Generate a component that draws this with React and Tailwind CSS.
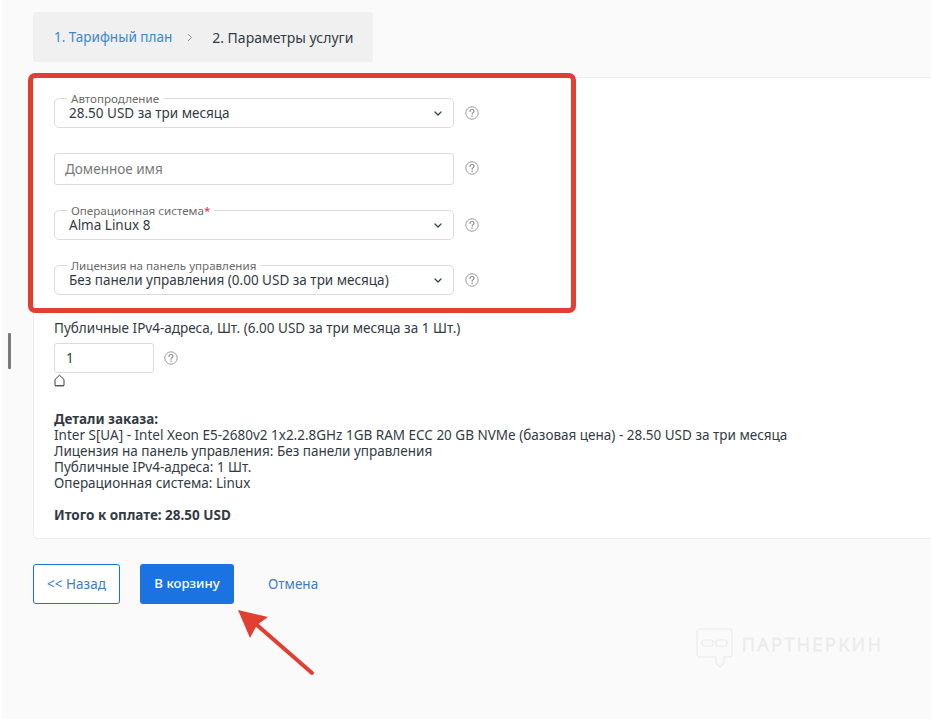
import React from "react";

const font = { fontFamily: '"Noto Sans", "Open Sans", sans-serif' };

function Help() {
  return (
    <svg width="14" height="14" viewBox="0 0 14 14" className="shrink-0" fill="none">
      <circle cx="7" cy="7" r="6.2" stroke="#9a9a9a" strokeWidth="1" />
      <path d="M5 5.4c0-1.2 1-1.9 2.1-1.9S9 4.2 9 5.2c0 1.4-1.9 1.5-1.9 3" stroke="#8a8a8a" strokeWidth="1.2" strokeLinecap="round" />
      <circle cx="7.1" cy="10.2" r="0.8" fill="#8a8a8a" />
    </svg>
  );
}

function Chevron() {
  return (
    <svg width="8" height="5" viewBox="0 0 8 5" fill="none" className="shrink-0">
      <path d="M1 1l3 3 3-3" stroke="#2c3e50" strokeWidth="1.2" strokeLinecap="round" strokeLinejoin="round" />
    </svg>
  );
}

function SelectRow({ label, value, required, mt }) {
  return (
    <div className={`flex items-center ${mt}`}>
      <div className="relative flex h-[30px] w-[400px] items-center justify-between rounded-[5px] border border-[#dcdcdc] bg-white pl-[14px] pr-[11px]">
        <span className="absolute left-[12px] top-[-7px] bg-white px-[4px] text-[11.6px] leading-[13px] text-[#6b6b6b]">
          {label}
          {required && <span className="text-[#d9304f]">*</span>}
        </span>
        <span className="text-[13.5px] leading-[16px] text-[#333b45]">{value}</span>
        <Chevron />
      </div>
      <div className="ml-[11px]"><Help /></div>
    </div>
  );
}

export default function App() {
  return (
    <div style={font} className="relative h-[719px] w-[931px] overflow-hidden bg-white pl-[2px]">
      <div className="h-full w-full bg-[#fafafa] pl-[31px] pt-[12px]">
        <div className="flex h-[50px] w-[340px] items-center rounded-[3px] bg-[#f0f0f0] pl-[21px] text-[13.5px]">
          <span className="text-[#3d85d1]">1. Тарифный план</span>
          <svg width="6" height="9" viewBox="0 0 6 9" fill="none" className="ml-[15px]">
            <path d="M1 1l3.5 3.5L1 8" stroke="#8a8a8a" strokeWidth="1" />
          </svg>
          <span className="ml-[19px] text-[14px] text-[#333b45]">2. Параметры услуги</span>
        </div>

        <div className="mt-[15px] h-[462px] w-[900px] rounded-bl-[5px] border-b border-l border-t border-[#ececec] bg-white pl-[20px] pt-[20px]">
          <SelectRow label="Автопродление" value="28.50 USD за три месяца" />
          <div className="mt-[25px] flex items-center">
            <div className="flex h-[32px] w-[400px] items-center rounded-[3px] border border-[#dcdcdc] bg-white pl-[10px] text-[13.5px] text-[#7a7a7a]">
              Доменное имя
            </div>
            <div className="ml-[11px] -translate-y-[1px]"><Help /></div>
          </div>
          <SelectRow label="Операционная система" value="Alma Linux 8" required mt="mt-[25px]" />
          <SelectRow label="Лицензия на панель управления" value="Без панели управления (0.00 USD за три месяца)" mt="mt-[25px]" />

          <div className="mt-[24px] text-[13.5px] leading-[18px] text-[#333b45]">
            Публичные IPv4-адреса, Шт. (6.00 USD за три месяца за 1 Шт.)
          </div>
          <div className="mt-[6px] flex items-center">
            <div className="flex h-[30px] w-[100px] items-center rounded-[3px] border border-[#dcdcdc] pl-[11px] text-[13.5px] text-[#333b45]">1</div>
            <div className="ml-[10px]"><Help /></div>
          </div>
          <svg width="12" height="13" viewBox="0 0 12 13" fill="none" className="mt-[1px] block">
            <path d="M1 11.5V5.5L5.5 1.2 10 5.5v6z" stroke="#3a3a3a" strokeWidth="1" />
            <path d="M1 12.3h9" stroke="#aaa" strokeWidth="1" />
          </svg>

          <div className="mt-[24px] text-[13.5px] leading-[16px] text-[#333b45]">
            <div className="font-bold">Детали заказа:</div>
            <div className="whitespace-nowrap">Inter S[UA] - Intel Xeon E5-2680v2 1x2.2.8GHz 1GB RAM ECC 20 GB NVMe (базовая цена) - 28.50 USD за три месяца</div>
            <div>Лицензия на панель управления: Без панели управления</div>
            <div>Публичные IPv4-адреса: 1 Шт.</div>
            <div>Операционная система: Linux</div>
            <div className="mt-[16px] font-bold">Итого к оплате: 28.50 USD</div>
          </div>
        </div>

        <div className="mt-[25px] flex items-center text-[13.5px]">
          <div className="flex h-[40px] w-[87px] items-center justify-center rounded-[3px] border border-[#1a73c8] bg-white text-[#3d7cc9]">&lt;&lt; Назад</div>
          <div className="ml-[20px] flex h-[40px] w-[94px] items-center justify-center rounded-[3px] bg-[#1a73e0] text-[13.2px] font-medium text-white">В корзину</div>
          <div className="ml-[34px] text-[#3d7cc9]">Отмена</div>
        </div>
      </div>

      <div className="absolute left-[8px] top-[333px] h-[36px] w-[3px] rounded-[1px] bg-[#7a7a7a]" />

      <div className="pointer-events-none absolute left-[28px] top-[73px] h-[240px] w-[548px] rounded-[7px] border-[5px] border-[#e23f33]" />

      <svg className="pointer-events-none absolute left-[230px] top-[600px]" width="90" height="80" viewBox="0 0 90 80" fill="none">
        <path d="M27 25L82 73" stroke="#e23f33" strokeWidth="4" strokeLinecap="round" />
        <path d="M8 10L38 17L27 25L20 38z" fill="#e23f33" />
      </svg>

      <div className="pointer-events-none absolute left-[696px] top-[628px] flex items-start">
        <svg width="37" height="40" viewBox="0 0 37 40" fill="none">
          <path d="M4 1h29a3 3 0 013 3v22a3 3 0 01-3 3h-5v6l-4 4-4-4v-6H4a3 3 0 01-3-3V4a3 3 0 013-3z" stroke="#ececec" strokeWidth="1.2" />
          <rect x="6" y="12" width="11" height="6" rx="2" stroke="#ececec" strokeWidth="1.2" />
          <rect x="20" y="12" width="11" height="6" rx="2" stroke="#ececec" strokeWidth="1.2" />
          <path d="M17 14h3" stroke="#ececec" strokeWidth="1.2" />
        </svg>
        <span className="ml-[9px] mt-[5px] text-[18px] font-light leading-[22px] tracking-[2.7px] text-transparent [-webkit-text-stroke:1px_#ececec]">ПАРТНЕРКИН</span>
      </div>
    </div>
  );
}
